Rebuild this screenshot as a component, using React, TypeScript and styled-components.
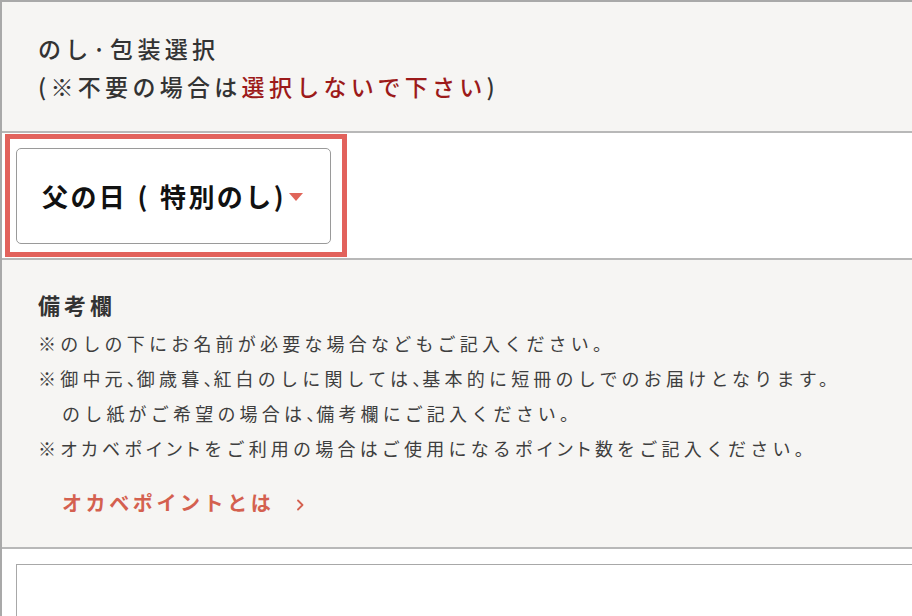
import React from "react";
import styled, { createGlobalStyle } from "styled-components";

const Global = createGlobalStyle`
  html, body { margin: 0; padding: 0; background: #ffffff; }
  body { font-family: "Noto Sans CJK JP", "Noto Sans", sans-serif; overflow: hidden; }
`;

const Frame = styled.div`
  width: 930px;
  height: 616px;
  border-top: 2px solid #a9a9a9;
  border-left: 2px solid #a9a9a9;
  box-sizing: border-box;
  display: flex;
  flex-direction: column;
  overflow: hidden;
`;

const Section = styled.div<{ $tone: "gray" | "white" }>`
  flex-shrink: 0;
  background: ${(p) => (p.$tone === "gray" ? "#f6f5f3" : "#ffffff")};
  border-bottom: 2px solid #b8b8b8;
  box-sizing: border-box;
`;

const Header = styled(Section)`
  height: 131px;
  padding: 27px 0 0 36px;
`;

const HeaderLine = styled.div`
  font-size: 23px;
  line-height: 38px;
  font-weight: 500;
  color: #333333;
  letter-spacing: 4.3px;
`;

const Warn = styled.span`
  color: #9c1a1a;
`;

const SelectRow = styled(Section)`
  height: 127px;
  padding: 1px 0 0 3px;
`;

const Highlight = styled.div`
  width: 342px;
  height: 123px;
  box-sizing: border-box;
  border: 5px solid #e2625c;
  padding: 9px 0 0 6px;
`;

const SelectBox = styled.div`
  width: 315px;
  height: 96px;
  box-sizing: border-box;
  border: 1px solid #9a9a9a;
  border-radius: 5px;
  background: #ffffff;
  display: flex;
  align-items: center;
  padding: 0 0 2px 25px;
  gap: 3px;
`;

const SelectText = styled.span`
  font-size: 26px;
  font-weight: 700;
  color: #111111;
  letter-spacing: 2.4px;
  word-spacing: 2px;
  white-space: pre;
`;

const Caret = styled.span`
  width: 0;
  height: 0;
  border-left: 7.5px solid transparent;
  border-right: 7.5px solid transparent;
  border-top: 8px solid #e0655a;
  margin-top: 4px;
`;

const Notes = styled(Section)`
  height: 289px;
  padding: 27px 0 0 36px;
`;

const NotesTitle = styled.div`
  font-size: 22px;
  line-height: 34px;
  font-weight: 700;
  color: #333333;
  letter-spacing: 4px;
  margin-bottom: 5px;
`;

const Note = styled.div<{ $indent?: boolean }>`
  font-size: 18px;
  line-height: 35px;
  font-weight: 400;
  color: #3e3e3e;
  letter-spacing: 4.2px;
  padding-left: ${(p) => (p.$indent ? "24px" : "0")};
`;

const Comma = styled.span`
  font-feature-settings: "halt" 1;
  letter-spacing: 1px;
`;

const Kana = styled.span`
  font-feature-settings: "palt" 1;
`;

const LinkRow = styled.a`
  display: flex;
  align-items: center;
  gap: 22px;
  margin: 22px 0 0 24px;
  font-size: 20px;
  font-weight: 700;
  letter-spacing: 3.6px;
  color: #d4604f;
  text-decoration: none;
`;

const Chevron = styled.svg`
  width: 8px;
  height: 12px;
  margin-top: 5px;
`;

const Bottom = styled.div`
  flex: 1;
  display: flex;
  flex-direction: column;
  background: #ffffff;
  padding: 15px 0 0 14px;
`;

const TextArea = styled.div`
  flex: 1;
  border-top: 1px solid #a8a8a8;
  border-left: 1px solid #a8a8a8;
`;

const C = () => <Comma>、</Comma>;

export default function App() {
  return (
    <>
      <Global />
      <Frame>
        <Header $tone="gray">
          <HeaderLine>のし·包装選択</HeaderLine>
          <HeaderLine>
            (※不要の場合は<Warn>選択しないで下さい</Warn>)
          </HeaderLine>
        </Header>
        <SelectRow $tone="white">
          <Highlight>
            <SelectBox>
              <SelectText>父の日 ( 特別のし)</SelectText>
              <Caret />
            </SelectBox>
          </Highlight>
        </SelectRow>
        <Notes $tone="gray">
          <NotesTitle>備考欄</NotesTitle>
          <Note>※のしの下にお名前が必要な場合などもご記入ください。</Note>
          <Note>
            ※御中元<C />御歳暮<C />紅白のしに関しては<C />基本的に短冊のしでのお届けとなります。
          </Note>
          <Note $indent>
            のし紙がご希望の場合は<C />備考欄にご記入ください。
          </Note>
          <Note>
            ※<Kana>オカベポイント</Kana>をご利用の場合はご使用になる<Kana>ポイント</Kana>数をご記入ください。
          </Note>
          <LinkRow href="#">
            オカベポイントとは
            <Chevron viewBox="0 0 8 12">
              <path d="M2 1.5 L6.5 6 L2 10.5" fill="none" stroke="#d4604f" strokeWidth="1.8" strokeLinecap="round" strokeLinejoin="round" />
            </Chevron>
          </LinkRow>
        </Notes>
        <Bottom>
          <TextArea />
        </Bottom>
      </Frame>
    </>
  );
}
